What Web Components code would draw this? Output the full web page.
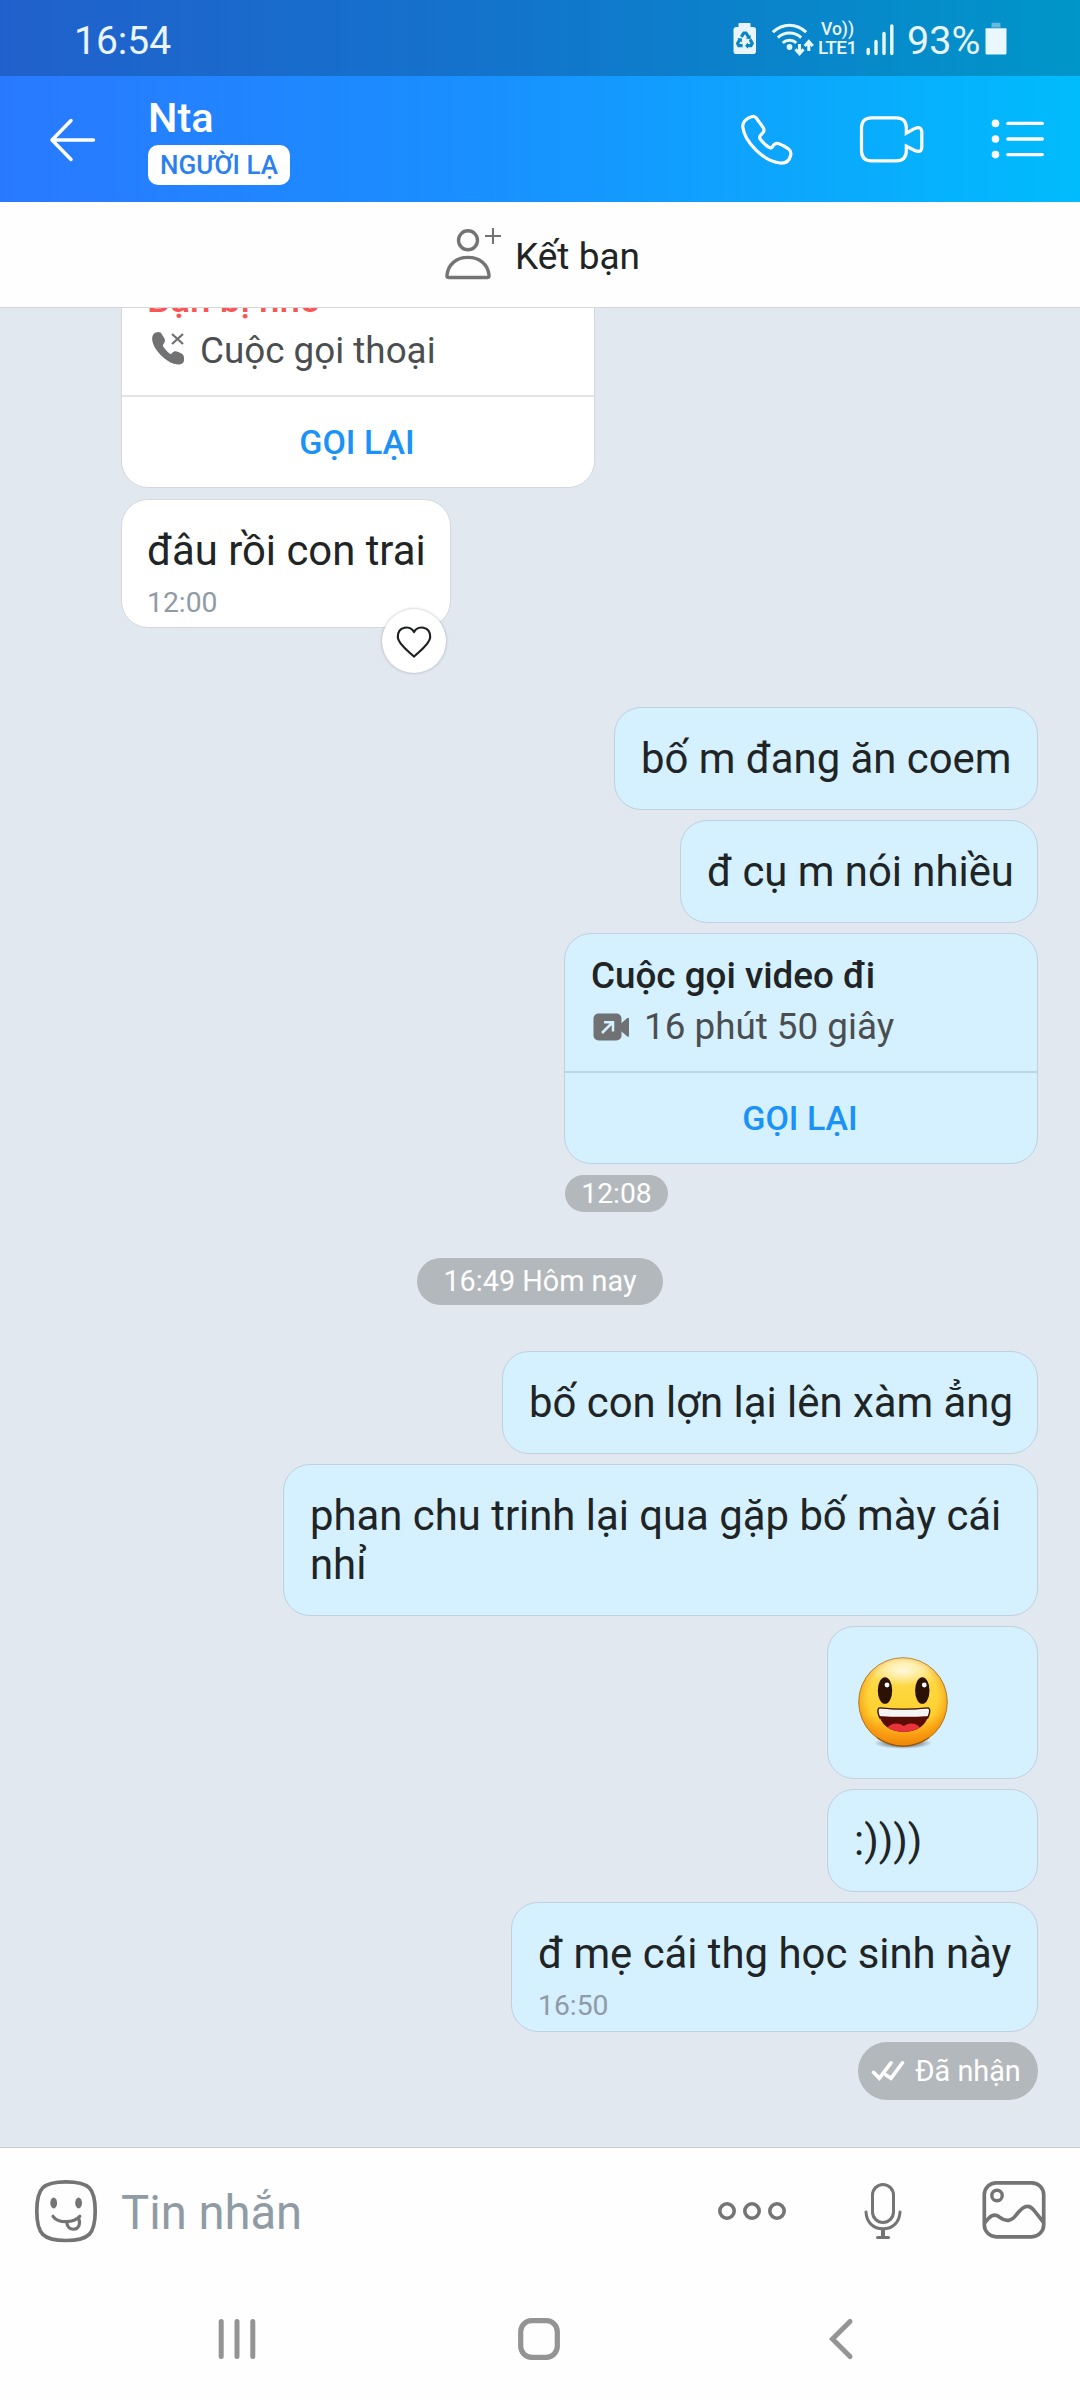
<!DOCTYPE html>
<html lang="vi">
<head>
<meta charset="utf-8">
<title>Nta</title>
<style>
html,body{margin:0;padding:0}
body{width:1080px;height:2400px;overflow:hidden;background:#fefefe;font-family:Roboto,"Noto Sans",sans-serif;color:#202425}
</style>
</head>
<body>
<chat-app></chat-app>
<script>
const define = (name, html) => {
  const t = document.createElement('template');
  t.innerHTML = html;
  customElements.define(name, class extends HTMLElement {
    constructor() {
      super();
      this.attachShadow({mode: 'open'}).appendChild(t.content.cloneNode(true));
    }
  });
};

const ICONS = {
  saver: [24, 34, `<path fill="#e9f4fc" d="M6.3 1h10.4q.8 0 .8.8V5h2.7q2.8 0 2.8 2.8v21.4q0 2.8-2.8 2.8H3.300q-2.800 0-2.800-2.800V7.800Q.5 5 3.300 5H5.500V1.800q0-.8.8-.8z"/><g fill="none" stroke="#0a86c5" stroke-width="3.200"><path d="M8.300 14.800l2.500-3.800h2.200l2.600 4"/><path d="M17.200 17.600l2 3.800-1.300 2.300h-4.200"/><path d="M9.600 23.700H5.800l-1.200-2.200 2.200-4"/></g><path fill="#0a86c5" d="M12.500 16.200l5-3.200.3 4.600zM15 20.500v6.200l-3-3zM4.200 16l4.800.4-.2 4z"/>`],
  wifi: [44, 34, `<g fill="none" stroke="#e9f7fe" stroke-width="3"><path d="M1.800 10.200Q9.500 3.300 18.500 3.300T35.200 10.200"/><path d="M6.800 15.600Q12 11.100 18.500 11.100T30.200 15.600"/><path d="M11.700 20.800Q14.500 18.300 18.500 18.300T25.300 20.800"/></g><circle cx="18.500" cy="25" r="2.900" fill="#e9f7fe"/><path d="M28.500 22v9M24.500 27.300l4 4.400 4-4.400M37.800 29V20.500M33.800 24l4-4.400 4 4.400" fill="none" stroke="#e9f7fe" stroke-width="3"/>`],
  signal: [28, 34, `<path d="M2.200 27.500v4M10 19.500v12M18 11.500v20M25.800 4v27.500" stroke="#e9f7fe" stroke-width="3.400" stroke-linecap="round"/>`],
  battery: [22, 34, `<path fill="#66bade" d="M6.500 5.500V1.800Q6.500.8 7.500.8h7Q15.500.8 15.500 1.800V5.500z"/><path fill="#e9f7fe" d="M.5 6.200h21V31Q21.500 32.500 20 32.500H2Q.5 32.500.5 31z"/>`],
  back: [50, 50, `<path d="M24 5.500L5 25l19 19.500M5.500 25H46.500" fill="none" stroke="#fff" stroke-width="3.500" stroke-linecap="round" stroke-linejoin="round"/>`],
  phone: [56, 54, `<path d="M13.500 4.700C15.500 3.900 17.300 4.600 18.500 6.200L25.200 15.600C26.400 17.400 26.200 19.300 24.800 20.900L22.200 23.700C21.300 24.800 21.500 26 22.400 27.200C25 30.700 28 33.700 31.500 35.600C32.600 36.200 33.500 35.900 34.300 34.900L35.800 32.800C37.200 31.300 39 31 41 31.700C44 32.800 48 35 50.600 37C52.800 38.700 53.300 40.800 52.600 43.500C51.300 49 47.500 51.500 42 51C26 49.500 6.500 30 4.800 15C4.300 10.500 8 6.300 13.500 4.700Z" fill="none" stroke="#fff" stroke-width="3.200" stroke-linejoin="round"/>`],
  video: [68, 54, `<path d="M49.300 21.200V15.800Q49.300 5.800 39.300 5.800H14.500Q4.500 5.800 4.500 15.800V38.800Q4.500 48.800 14.500 48.800H39.300Q49.300 48.800 49.300 38.800V34.200L57.800 38.500Q64.800 41.500 64.800 34.500V20.500Q64.800 13.600 57.800 16.400Z" fill="none" stroke="#fff" stroke-width="3.200" stroke-linejoin="miter"/>`],
  list: [56, 40, `<g fill="#fff"><circle cx="4.500" cy="4.400" r="3.800"/><circle cx="4.500" cy="20" r="3.800"/><circle cx="4.500" cy="35.600" r="3.800"/></g><path d="M16.800 4.400h34.500M16.800 20h34.500M16.800 35.600h34.500" stroke="#fff" stroke-width="3.400" stroke-linecap="round"/>`],
  addfriend: [60, 56, `<g fill="none" stroke="#747474" stroke-width="3.400"><circle cx="25" cy="16.300" r="9.500"/><path d="M5.500 53.500C3.900 53.500 3.800 52.500 4 51C5.300 40 13.500 33.400 25 33.400S44.700 40 46 51C46.200 52.500 46.100 53.500 44.500 53.500Z" stroke-linejoin="round"/></g><path d="M50 4v16M42 12h16" stroke="#747474" stroke-width="2.100"/>`],
  missed: [36, 36, `<path fill="#6f7173" d="M7.200 1.200C9.500.8 11 1.500 12 3.400L14.300 7.300C15.500 9.300 15.100 11 13.700 12.700C12.500 14 12.800 15 13.700 16.300C15.600 18.900 17.400 20.900 19.600 22.500C20.600 23.200 21.300 23 22.200 22C23.700 20.200 25.600 19.800 27.700 20.800L31.500 22.500C33.200 23.400 34 24.700 34 27V29.500C33.800 32.300 31.500 33.600 28.500 33.600C17 33.300 2.600 18 2.200 8.500C2 4.500 3.500 1.800 7.200 1.200Z"/><path d="M22 3L33 13M33 3L22 13" stroke="#6f7173" stroke-width="2.300"/>`],
  outvideo: [38, 30, `<rect x="1.500" y="1.500" width="28" height="27" rx="5" fill="#6f7173"/><path d="M29 11.500L35 6.200Q37 4.800 37 7V23.500Q37 25.700 35 24.300L29 19z" fill="#6f7173"/><path d="M10 21L20.500 10.500M12 10.300h9V19.500" fill="none" stroke="#d5f0ff" stroke-width="2.500"/>`],
  heart: [40, 36, `<path d="M20 9C16.500 2.300 3.500 2.500 3.800 14.300C4 21.300 15.500 29 20 33.600C24.500 29 36 21.300 36.200 14.300C36.500 2.500 23.500 2.300 20 9Z" fill="none" stroke="#1d2021" stroke-width="2.200" stroke-linejoin="round"/>`],
  ticks: [34, 22, `<path d="M2.500 12.300L8.300 18.300L20 2.800M15 15L20 18.300L31.500 2.800" fill="none" stroke="#fff" stroke-width="3.600" stroke-linecap="round"/>`],
  sticker: [66, 66, `<path d="M33 3.800C56 3.800 62.200 10 62.200 33S56 62.500 33 62.500S3.800 56 3.800 33S10 3.800 33 3.800Z" fill="none" stroke="#747474" stroke-width="3.700"/><ellipse cx="20.700" cy="25" rx="3.400" ry="5.400" fill="#747474"/><ellipse cx="45.600" cy="25" rx="3.400" ry="5.400" fill="#747474"/><path d="M20 38.300C25 45.500 41 45.500 46.800 38.300" fill="none" stroke="#747474" stroke-width="3.200" stroke-linecap="round"/><path d="M33.800 44C34 53.500 46.500 53.500 46.500 45Q46.500 43 45.700 40.300" fill="none" stroke="#747474" stroke-width="3.200"/>`],
  more: [72, 20, `<g fill="none" stroke="#747474" stroke-width="3.600"><circle cx="11" cy="10" r="7.200"/><circle cx="36" cy="10" r="7.200"/><circle cx="61" cy="10" r="7.200"/></g>`],
  mic: [40, 60, `<g fill="none" stroke="#747474" stroke-width="3"><rect x="9.500" y="3.500" width="21" height="38" rx="10.500"/><path d="M3 31C3.500 41.500 10.500 47.800 20 47.800S36.500 41.500 37 31" stroke-linecap="round"/></g><path d="M20 48v8" stroke="#747474" stroke-width="4"/><path d="M14.500 56.500h11" stroke="#747474" stroke-width="3" stroke-linecap="round"/>`],
  image: [66, 60, `<g fill="none" stroke="#747474" stroke-width="3.700"><rect x="3.300" y="2.800" width="59.400" height="54" rx="12"/><circle cx="16" cy="15.500" r="5.200" stroke-width="3.400"/><path d="M3.500 43C8 37.500 13 31.500 19 37.500C25 42 30.500 41.500 35.500 34.500C41.500 27 47 22.500 53.500 31L62.700 42.500"/></g>`],
  recents: [40, 46, `<path d="M4.200 5.500v35M20 5.500v35M35.800 5.500v35" stroke="#949494" stroke-width="5" stroke-linecap="round"/>`],
  home: [46, 46, `<rect x="4.700" y="4.700" width="36.600" height="36.600" rx="11" fill="none" stroke="#949494" stroke-width="5.200"/>`],
  navback: [26, 46, `<path d="M22 5.500L4.500 23L22 40.500" fill="none" stroke="#949494" stroke-width="5" stroke-linecap="round"/>`],
  grin: [96, 100, `<defs><linearGradient id="a" x1="0" y1="0" x2="0" y2="1"><stop offset="0" stop-color="#fdeea0"/><stop offset=".3" stop-color="#fdd842"/><stop offset=".65" stop-color="#ffd02e"/><stop offset=".9" stop-color="#fb9a12"/><stop offset="1" stop-color="#ec7a08"/></linearGradient><radialGradient id="b" cx=".5" cy=".45" r=".55"><stop offset=".7" stop-color="#f79a10" stop-opacity="0"/><stop offset="1" stop-color="#f08a0a" stop-opacity=".85"/></radialGradient><radialGradient id="c" cx=".5" cy=".5" r=".5"><stop offset="0" stop-color="#fff" stop-opacity=".75"/><stop offset="1" stop-color="#fff" stop-opacity="0"/></radialGradient><radialGradient id="s" cx=".5" cy=".5" r=".5"><stop offset=".3" stop-color="#444" stop-opacity=".8"/><stop offset="1" stop-color="#444" stop-opacity="0"/></radialGradient><clipPath id="m"><path d="M24.500 53Q48 55.500 71.500 53Q74 53 73.500 56.500C71.500 70 62 76.500 48 76.500S24.500 70 22.500 56.500Q22 53 24.500 53Z"/></clipPath></defs><ellipse cx="48" cy="88" rx="29" ry="6" fill="url(#s)"/><circle cx="48" cy="47" r="44.300" fill="url(#a)"/><circle cx="48" cy="47" r="44.300" fill="url(#b)" stroke="#a87018" stroke-width=".9"/><ellipse cx="48" cy="16" rx="31" ry="15" fill="url(#c)"/><path d="M22 82.800Q48 99.500 74 82.800" fill="none" stroke="#754009" stroke-width="1.300" opacity=".6"/><ellipse cx="30" cy="35.500" rx="7.200" ry="13.300" fill="#2b1204"/><ellipse cx="67.300" cy="35.500" rx="7.200" ry="13.300" fill="#2b1204"/><circle cx="32" cy="30" r="2.400" fill="#fff"/><circle cx="69.300" cy="30" r="2.400" fill="#fff"/><g transform="translate(.8 .3)"><g clip-path="url(#m)"><path fill="#5a0b04" d="M20 50h56v30H20z"/><ellipse cx="40.500" cy="76" rx="10" ry="7.800" fill="#e8323c"/><ellipse cx="55.500" cy="76" rx="10" ry="7.800" fill="#e8323c"/><path d="M20 50H76V60.500Q48 62.500 20 60.500Z" fill="#f4f4f4"/></g><path d="M24.500 52.600Q48 55 71.500 52.600Q74.500 52.500 73.800 57Q73.300 60 71.500 63.500M24.500 52.600Q21.500 52.500 22.200 57Q22.700 60 24.500 63.500" fill="none" stroke="#38190a" stroke-width="1.400"/></g>`]
};

customElements.define('app-icon', class extends HTMLElement {
  connectedCallback() {
    const [w, h, body] = ICONS[this.getAttribute('name')];
    const root = this.shadowRoot || this.attachShadow({mode: 'open'});
    root.innerHTML = `<style>:host{display:block;flex:none;width:${w}px;height:${h}px}svg{display:block}</style><svg width="${w}" height="${h}" viewBox="0 0 ${w} ${h}">${body}</svg>`;
  }
});

define('status-bar', `<style>
:host{display:flex;height:76px;box-sizing:border-box;padding-top:22px;background:rgba(0,0,0,.2);color:#e9f4fd;align-items:flex-start}
.t{font-size:39.500px;line-height:46px;margin-top:-4px;white-space:nowrap}
.clock{margin-left:74px;width:659px;font-size:39px}
.net{display:flex;flex-direction:column;width:43px;margin-left:4px;font-weight:500;white-space:nowrap}
.net span:first-child{padding-left:3px;font-size:17.500px;line-height:17px;margin-top:-1px}
.net span:last-child{font-size:19px;line-height:18px;margin-top:1px;letter-spacing:-.6px}
.pct{margin-left:13px;width:78px}
</style>
<span class="t clock">16:54</span><app-icon name="saver"></app-icon>
<app-icon name="wifi" style="margin-left:14px;margin-right:-1px"></app-icon>
<span class="net"><span>Vo))</span><span>LTE1</span></span>
<app-icon name="signal" style="margin-left:5px"></app-icon>
<span class="t pct">93%</span><app-icon name="battery"></app-icon>`);

define('name-badge', `<style>
:host{display:block;box-sizing:border-box;width:142px;height:40px;border-radius:10px;background:#fff;color:#2b80f0;font-size:26px;font-weight:500;line-height:41px;text-align:center;white-space:nowrap}
</style><slot></slot>`);

define('chat-header', `<style>
:host{display:flex;height:126px;align-items:center;color:#fff}
.who{display:flex;flex-direction:column;width:590px;margin-left:51px}
.name{font-size:41.500px;font-weight:500;line-height:48px;height:51px}
</style>
<app-icon name="back" style="margin-left:47px;margin-top:2px"></app-icon>
<div class="who"><div class="name"><slot></slot></div><name-badge><slot name="badge"></slot></name-badge></div>
<app-icon name="phone" style="margin-top:-1px"></app-icon>
<app-icon name="video" style="margin-left:63px"></app-icon>
<app-icon name="list" style="margin-left:66px"></app-icon>`);

define('friend-bar', `<style>
:host{display:flex;height:105px;border-bottom:1px solid #d5d7da;background:#fefefe;font-size:37px;line-height:109px;color:#202425;white-space:nowrap}
span{margin-left:12px}
</style>
<app-icon name="addfriend" style="margin-left:443px;margin-top:22px"></app-icon><span><slot></slot></span>`);

define('chat-bubble', `<style>
:host{display:flex;flex-direction:column;flex:none;box-sizing:border-box;align-self:flex-end;width:var(--w);height:var(--h,103px);border:1px solid #c0d0dc;border-radius:27px;background:#d5f0ff;padding:26px 20px 0 26px;font-size:41.850px;line-height:49.200px;position:relative;margin-bottom:10px}
:host([in]){align-self:flex-start;background:#fff;border-color:#d4d8dc;padding-left:25px}
::slotted(time){display:block;margin-top:11px;font-size:28.300px;line-height:33px;color:#8f9ba5}
::slotted(reaction-button){position:absolute;right:4px;bottom:-46px}
</style><slot></slot>`);

define('reaction-button', `<style>
:host{display:flex;width:64px;height:64px;border-radius:50%;background:#fff;align-items:center;justify-content:center;box-shadow:0 0 3px rgba(60,75,90,.4)}
</style><app-icon name="heart"></app-icon>`);

define('call-card', `<style>
:host{display:flex;flex-direction:column;flex:none;box-sizing:border-box;align-self:flex-end;width:474px;height:231px;border:1px solid #c0d0dc;border-radius:27px;background:#d5f0ff;overflow:hidden;margin-bottom:11px}
:host([in]){align-self:flex-start;background:#fff;border-color:#d4d8dc;--line:#e2e4e6}
.top{height:121px;padding:16px 26px 0;border-bottom:2px solid var(--line,#b9d5e3);white-space:nowrap}
.title{font-size:36.800px;font-weight:500;line-height:51px;color:var(--title,#202425)}
.row{display:flex;align-items:center;font-size:36.800px;line-height:51px;color:#4b4e50}
.act{flex:1;display:flex;align-items:center;justify-content:center;font-size:34px;font-weight:500;color:#1a92f8;padding-right:2px}
:host([in]) .top{padding-left:25px}
</style>
<div class="top"><div class="title"><slot name="title"></slot></div><div class="row"><slot name="icon"></slot><slot></slot></div></div>
<div class="act"><slot name="action"></slot></div>`);

define('time-pill', `<style>
:host{display:flex;flex:none;box-sizing:border-box;align-items:center;justify-content:center;border-radius:30px;background:#b3b8bc;color:#fff;font-size:var(--fs,28.800px);line-height:33px;white-space:nowrap;width:var(--w);height:var(--h)}
</style><slot></slot>`);

define('message-bar', `<style>
:host{display:flex;height:130px;border-top:1px solid #c9ced3;align-items:flex-start;color:#8f9ba5;font-size:47.200px}
span{width:591px;margin-left:22px;line-height:55px;padding-top:38px;white-space:nowrap}
</style>
<app-icon name="sticker" style="margin:30px 0 0 33px"></app-icon><span><slot></slot></span>
<app-icon name="more" style="margin:53px 0 0 4px"></app-icon>
<app-icon name="mic" style="margin:33px 0 0 75px"></app-icon>
<app-icon name="image" style="margin:32px 0 0 78px"></app-icon>`);

define('nav-bar', `<style>
:host{display:flex;height:122px;padding-top:38px;box-sizing:border-box}
</style>
<app-icon name="recents" style="margin-left:217px"></app-icon>
<app-icon name="home" style="margin-left:259px"></app-icon>
<app-icon name="navback" style="margin-left:266px"></app-icon>`);

define('chat-app', `<style>
:host{display:flex;flex-direction:column;width:1080px;height:2400px;background:#fefefe}
.head{background:linear-gradient(90deg,#2979ff,#1990ff 45%,#00bcfc)}
.log{display:flex;flex-direction:column;height:1839px;box-sizing:border-box;overflow:hidden;background:#e2e8f0;padding:0 42px 0 121px}
</style>
<div class="head"><status-bar></status-bar><chat-header>Nta<span slot="badge">NGƯỜI LẠ</span></chat-header></div>
<friend-bar>Kết bạn</friend-bar>
<div class="log">
<call-card in style="margin-top:-51px;--title:#fa5555"><span slot="title">Bạn bị nhỡ</span><app-icon slot="icon" name="missed" style="margin:-4px 14px 0 3px"></app-icon>Cuộc gọi thoại<span slot="action">GỌI LẠI</span></call-card>
<chat-bubble in style="--w:330px;--h:129px;margin-bottom:79px"><span>đâu rồi con trai</span><time>12:00</time><reaction-button></reaction-button></chat-bubble>
<chat-bubble style="--w:424px">bố m đang ăn coem</chat-bubble>
<chat-bubble style="--w:358px">đ cụ m nói nhiều</chat-bubble>
<call-card><span slot="title">Cuộc gọi video đi</span><app-icon slot="icon" name="outvideo" style="margin:0 14px 0 1px"></app-icon>16 phút 50 giây<span slot="action">GỌI LẠI</span></call-card>
<time-pill style="--w:103px;--h:37px;--fs:28.3px;margin-left:444px">12:08</time-pill>
<time-pill style="--w:246px;--h:47px;margin:46px 0 46px 296px">16:49 Hôm nay</time-pill>
<chat-bubble style="--w:536px">bố con lợn lại lên xàm ẳng</chat-bubble>
<chat-bubble style="--w:755px;--h:152px">phan chu trinh lại qua gặp bố mày cái nhỉ</chat-bubble>
<chat-bubble style="--w:211px;--h:153px"><app-icon name="grin" style="margin:2px 0 0 1px"></app-icon></chat-bubble>
<chat-bubble style="--w:211px">:))))</chat-bubble>
<chat-bubble style="--w:527px;--h:130px"><span>đ mẹ cái thg học sinh này</span><time>16:50</time></chat-bubble>
<time-pill style="--w:180px;--h:58px;align-self:flex-end"><app-icon name="ticks" style="margin-right:10px;margin-left:-4px"></app-icon>Đã nhận</time-pill>
</div>
<message-bar>Tin nhắn</message-bar>
<nav-bar></nav-bar>`);
</script>
</body>
</html>
